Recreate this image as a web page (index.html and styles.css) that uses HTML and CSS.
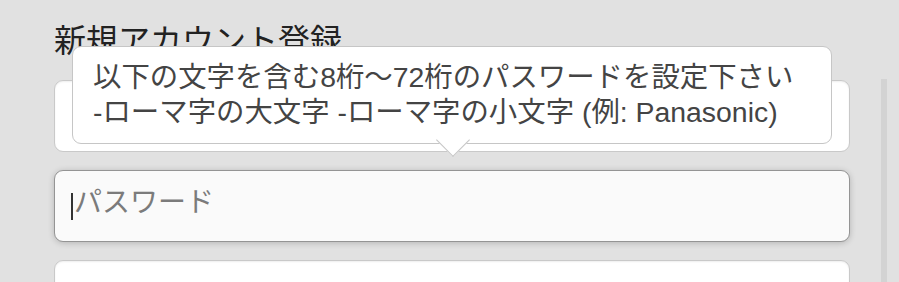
FILE: index.html
```html
<!DOCTYPE html>
<html lang="ja">
<head>
<meta charset="utf-8">
<title>新規アカウント登録</title>
<link rel="stylesheet" href="styles.css">
</head>
<body>
<div class="page">
  <div class="form">
    <h1 class="title">新規アカウント登録</h1>
    <div class="fields">
      <div class="field">
        <input class="input" type="text" aria-label="メールアドレス">
      </div>
      <div class="field field-focus">
        <input class="input input-focus" type="password" placeholder="パスワード">
        <span class="caret"></span>
      </div>
      <div class="field">
        <input class="input" type="password" aria-label="パスワード（確認）">
      </div>
    </div>
    <div class="tooltip">
      <span class="tooltip-arrow"></span>
      <p class="tooltip-text">以下の文字を含む8桁〜72桁のパスワードを設定下さい<br>-ローマ字の大文字 -ローマ字の小文字 (例: Panasonic)</p>
    </div>
  </div>
  <div class="strip"></div>
</div>
</body>
</html>
```

FILE: styles.css
```css
html, body {
  margin: 0;
  padding: 0;
}
body {
  background: #e1e1e1;
  font-family: "Liberation Sans", "Noto Sans CJK JP", sans-serif;
  overflow: hidden;
}
.page {
  display: flex;
  min-height: 100vh;
}
.form {
  position: relative;
  width: 796px;
  margin-left: 54px;
  padding-top: 23px;
}
.title {
  margin: 0 0 21px 0;
  font-size: 32px;
  line-height: 36px;
  font-weight: normal;
  color: #222;
}
.fields {
  display: flex;
  flex-direction: column;
  gap: 18px;
}
.field {
  position: relative;
  height: 72px;
}
.input {
  box-sizing: border-box;
  display: block;
  width: 100%;
  height: 72px;
  margin: 0;
  padding: 0 19px 6px 19px;
  border: 1px solid #c9c9c9;
  border-radius: 9px;
  background: #fff;
  box-shadow: inset 0 1px 2px rgba(0,0,0,0.07);
  font-family: "Liberation Sans", "Noto Sans CJK JP", sans-serif;
  font-size: 28px;
  color: #333;
  outline: none;
}
.input::placeholder {
  color: #7b7b7b;
  opacity: 1;
}
.input-focus {
  background: #fafafa;
  border-color: #949494;
  box-shadow: 0 1px 6px rgba(0,0,0,0.2);
}
.caret {
  position: absolute;
  left: 17px;
  top: 23px;
  width: 2px;
  height: 27px;
  background: #333;
}
.tooltip {
  position: absolute;
  left: 18px;
  top: 46px;
  box-sizing: border-box;
  width: 760px;
  height: 98px;
  padding: 13px 20px;
  background: #fff;
  border: 1px solid #c6c6c6;
  border-radius: 9px;
}
.tooltip-arrow {
  position: absolute;
  left: 368px;
  top: 81px;
  width: 23px;
  height: 23px;
  background: #fff;
  border-right: 1px solid #c6c6c6;
  border-bottom: 1px solid #c6c6c6;
  transform: rotate(45deg);
}
.tooltip-text {
  position: relative;
  margin: 0;
  font-size: 28.4px;
  line-height: 35px;
  color: #444;
  white-space: nowrap;
}
.strip {
  width: 6px;
  margin-left: 31px;
  margin-top: 79px;
  background: #d3d3d3;
}
```
